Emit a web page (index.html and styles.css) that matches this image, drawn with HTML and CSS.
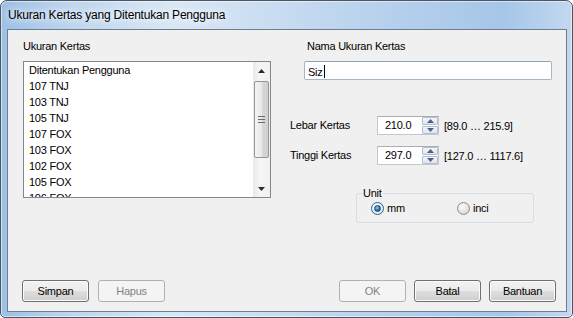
FILE: index.html
```html
<!DOCTYPE html>
<html lang="id">

<head>
          <meta charset="UTF-8">
          <meta name="viewport" content="width=device-width, initial-scale=1.0">
          <title>Ukuran Kertas yang Ditentukan Pengguna</title>
          <link rel="stylesheet" href="styles.css">
</head>

<body>
          <div class="window">
                    <div class="titlebar">Ukuran Kertas yang Ditentukan Pengguna</div>
                    <div class="client">
                              <div class="main">
                                        <div class="col-left">
                                                  <div class="label">Ukuran Kertas</div>
                                                  <div class="listbox">
                                                            <ul class="items">
                                                                      <li>Ditentukan Pengguna</li>
                                                                      <li>107 TNJ</li>
                                                                      <li>103 TNJ</li>
                                                                      <li>105 TNJ</li>
                                                                      <li>107 FOX</li>
                                                                      <li>103 FOX</li>
                                                                      <li>102 FOX</li>
                                                                      <li>105 FOX</li>
                                                                      <li>106 FOX</li>
                                                            </ul>
                                                            <div class="scrollbar">
                                                                      <div class="arrow">
                                                                                <svg width="7" height="4" viewBox="0 0 7 4"><path d="M0 4 L3.5 0 L7 4 Z" fill="#2b2b2b"/></svg>
                                                                      </div>
                                                                      <div class="track">
                                                                                <div class="thumb">
                                                                                          <span class="grip"></span>
                                                                                </div>
                                                                      </div>
                                                                      <div class="arrow">
                                                                                <svg width="7" height="4" viewBox="0 0 7 4"><path d="M0 0 L7 0 L3.5 4 Z" fill="#2b2b2b"/></svg>
                                                                      </div>
                                                            </div>
                                                  </div>
                                        </div>
                                        <div class="col-right">
                                                  <div class="name-field">
                                                            <div class="label">Nama Ukuran Kertas</div>
                                                            <div class="textbox">Siz<span class="caret"></span></div>
                                                  </div>
                                                  <div class="spin-row first">
                                                            <span class="spin-label">Lebar Kertas</span>
                                                            <div class="spinbox">
                                                                      <span class="spin-value">210.0</span>
                                                                      <div class="spin-buttons">
                                                                                <span class="spin-btn"><svg width="7" height="4" viewBox="0 0 7 4"><path d="M0 4 L3.5 0 L7 4 Z" fill="#4d6185"/></svg></span>
                                                                                <span class="spin-btn"><svg width="7" height="4" viewBox="0 0 7 4"><path d="M0 0 L7 0 L3.5 4 Z" fill="#4d6185"/></svg></span>
                                                                      </div>
                                                            </div>
                                                            <span class="range">[89.0 … 215.9]</span>
                                                  </div>
                                                  <div class="spin-row">
                                                            <span class="spin-label">Tinggi Kertas</span>
                                                            <div class="spinbox">
                                                                      <span class="spin-value">297.0</span>
                                                                      <div class="spin-buttons">
                                                                                <span class="spin-btn"><svg width="7" height="4" viewBox="0 0 7 4"><path d="M0 4 L3.5 0 L7 4 Z" fill="#4d6185"/></svg></span>
                                                                                <span class="spin-btn"><svg width="7" height="4" viewBox="0 0 7 4"><path d="M0 0 L7 0 L3.5 4 Z" fill="#4d6185"/></svg></span>
                                                                      </div>
                                                            </div>
                                                            <span class="range">[127.0 … 1117.6]</span>
                                                  </div>
                                                  <fieldset class="unit">
                                                            <legend>Unit</legend>
                                                            <label class="radio"><span class="dot checked"></span>mm</label>
                                                            <label class="radio"><span class="dot"></span>inci</label>
                                                  </fieldset>
                                        </div>
                              </div>
                              <div class="buttons">
                                        <div class="btn-group">
                                                  <button class="btn">Simpan</button>
                                                  <button class="btn" disabled>Hapus</button>
                                        </div>
                                        <div class="btn-group right">
                                                  <button class="btn" disabled>OK</button>
                                                  <button class="btn">Batal</button>
                                                  <button class="btn">Bantuan</button>
                                        </div>
                              </div>
                    </div>
          </div>
</body>

</html>
```

FILE: styles.css
```css
* {
          box-sizing: border-box;
}

body {
          margin: 0;
          background: #ffffff;
          font-family: "Liberation Sans", Arial, sans-serif;
          font-size: 11px;
          letter-spacing: -0.25px;
          color: #000000;
}

.window {
          width: 573px;
          height: 318px;
          border: 1px solid #4b5665;
          border-radius: 7px 7px 5px 5px;
          background: linear-gradient(90deg, #9dc0e4 0%, #bdd5ee 12%, #d9e7f5 30%, #c9dcf1 48%, #b4cfec 70%, #a6c6e8 88%, #c2d8ef 100%);
          box-shadow: inset 0 0 0 1px rgba(255, 255, 255, 0.55);
          display: flex;
          flex-direction: column;
}

.titlebar {
          height: 28px;
          padding: 7px 0 0 7px;
          font-size: 12px;
          letter-spacing: -0.2px;
          color: #000000;
          text-shadow: 0 0 6px #ffffff, 0 0 10px #ffffff;
}

.client {
          margin: 0 5px 0 6px;
          height: 283px;
          border: 1px solid #6d7c8e;
          background: #f0f0f0;
          display: flex;
          flex-direction: column;
          justify-content: space-between;
}

.main {
          display: flex;
          padding: 9px 0 0 15px;
}

.label {
          height: 14px;
          line-height: 14px;
}

.col-left {
          width: 248px;
}

.listbox {
          margin-top: 8px;
          width: 248px;
          height: 137px;
          border: 1px solid #828790;
          background: #ffffff;
          display: flex;
          overflow: hidden;
}

.items {
          list-style: none;
          margin: 0;
          padding: 0;
          flex: 1;
}

.items li {
          height: 16px;
          line-height: 16px;
          padding-left: 5px;
}

.scrollbar {
          width: 17px;
          display: flex;
          flex-direction: column;
          background: linear-gradient(90deg, #e8e8e8, #f6f6f6 40%, #f0f0f0);
}

.arrow {
          height: 17px;
          display: flex;
          align-items: center;
          justify-content: center;
}

.track {
          flex: 1;
          padding: 1px 0;
}

.thumb {
          height: 77px;
          margin: 1px 1px 0 1px;
          border: 1px solid #979797;
          border-radius: 2px;
          background: linear-gradient(90deg, #f4f4f4, #e9e9e9 50%, #d8d8d8 55%, #d0d0d0);
          display: flex;
          align-items: center;
          justify-content: center;
}

.grip {
          width: 7px;
          height: 7px;
          border-top: 1px solid #6c6c6c;
          border-bottom: 1px solid #6c6c6c;
          background: linear-gradient(#ffffff00 2px, #6c6c6c 2px, #6c6c6c 3px, #ffffff00 3px);
}

.col-right {
          margin-left: 19px;
          flex: 1;
}

.name-field {
          padding-left: 14px;
}

.name-field .label {
          padding-left: 3px;
}

.textbox {
          margin-top: 8px;
          width: 248px;
          height: 19px;
          border: 1px solid #a5b6c8;
          border-top-color: #8ea3b8;
          border-radius: 2px;
          background: #ffffff;
          padding: 2px 0 0 3px;
          line-height: 14px;
          display: flex;
          align-items: center;
}

.caret {
          width: 1px;
          height: 13px;
          margin-left: 1px;
          background: #000000;
}

.spin-row {
          display: flex;
          align-items: center;
          height: 19px;
          margin-top: 11px;
}

.spin-row.first {
          margin-top: 36px;
}

.spin-label {
          width: 87px;
          padding-bottom: 2px;
}

.spinbox {
          width: 62px;
          height: 19px;
          border: 1px solid #c2c8ce;
          border-top-color: #abadb3;
          background: #ffffff;
          display: flex;
}

.spin-value {
          flex: 1;
          padding-left: 7px;
          line-height: 17px;
}

.spin-buttons {
          width: 16px;
          display: flex;
          flex-direction: column;
          gap: 1px;
}

.spin-btn {
          flex: 1;
          border: 1px solid #b5bfcb;
          border-radius: 1px;
          background: linear-gradient(#f3f6fa, #dde5ee);
          display: flex;
          align-items: center;
          justify-content: center;
}

.range {
          margin-left: 5px;
          padding-top: 1px;
}

.unit {
          margin: 22px 0 0 66px;
          width: 178px;
          min-width: 0;
          height: 36px;
          padding: 0;
          border: 1px solid #d5dfe5;
          border-radius: 3px;
          display: flex;
          align-items: center;
}

.unit legend {
          padding: 0 1px;
          margin-left: 5px;
          line-height: 13px;
}

.radio {
          display: flex;
          align-items: center;
          gap: 3px;
          margin-top: -6px;
}

.radio:first-of-type {
          width: 86px;
          margin-left: 14px;
}

.dot {
          width: 13px;
          height: 13px;
          border-radius: 50%;
          border: 1px solid #8e8f8f;
          background: radial-gradient(circle at 40% 35%, #ffffff, #d9d9d9 70%, #c4c4c4);
          display: flex;
          align-items: center;
          justify-content: center;
}

.dot.checked {
          border-color: #2c628b;
          background: radial-gradient(circle at 40% 35%, #ffffff, #dbe7f2 80%);
}

.dot.checked::after {
          content: "";
          width: 7px;
          height: 7px;
          border-radius: 50%;
          background: radial-gradient(circle at 40% 35%, #8fd0f6, #1f6ea8 60%, #0d3e66);
          border: 1px solid #1a4b72;
          box-sizing: border-box;
}

.buttons {
          display: flex;
          justify-content: space-between;
          padding: 0 10px 9px 14px;
}

.btn-group {
          display: flex;
          gap: 9px;
}

.btn-group.right {
          gap: 8px;
}

.btn {
          width: 67px;
          height: 22px;
          padding: 0;
          font-family: "Liberation Sans", Arial, sans-serif;
          font-size: 11px;
          letter-spacing: -0.25px;
          color: #000000;
          border: 1px solid #707070;
          border-radius: 3px;
          background: linear-gradient(#f2f2f2 0%, #ebebeb 48%, #dddddd 52%, #cfcfcf 100%);
          box-shadow: inset 0 0 0 1px #fbfbfb;
}

.btn:disabled {
          color: #838383;
          border-color: #adb2b5;
          background: #f4f4f4;
          box-shadow: none;
}
```
